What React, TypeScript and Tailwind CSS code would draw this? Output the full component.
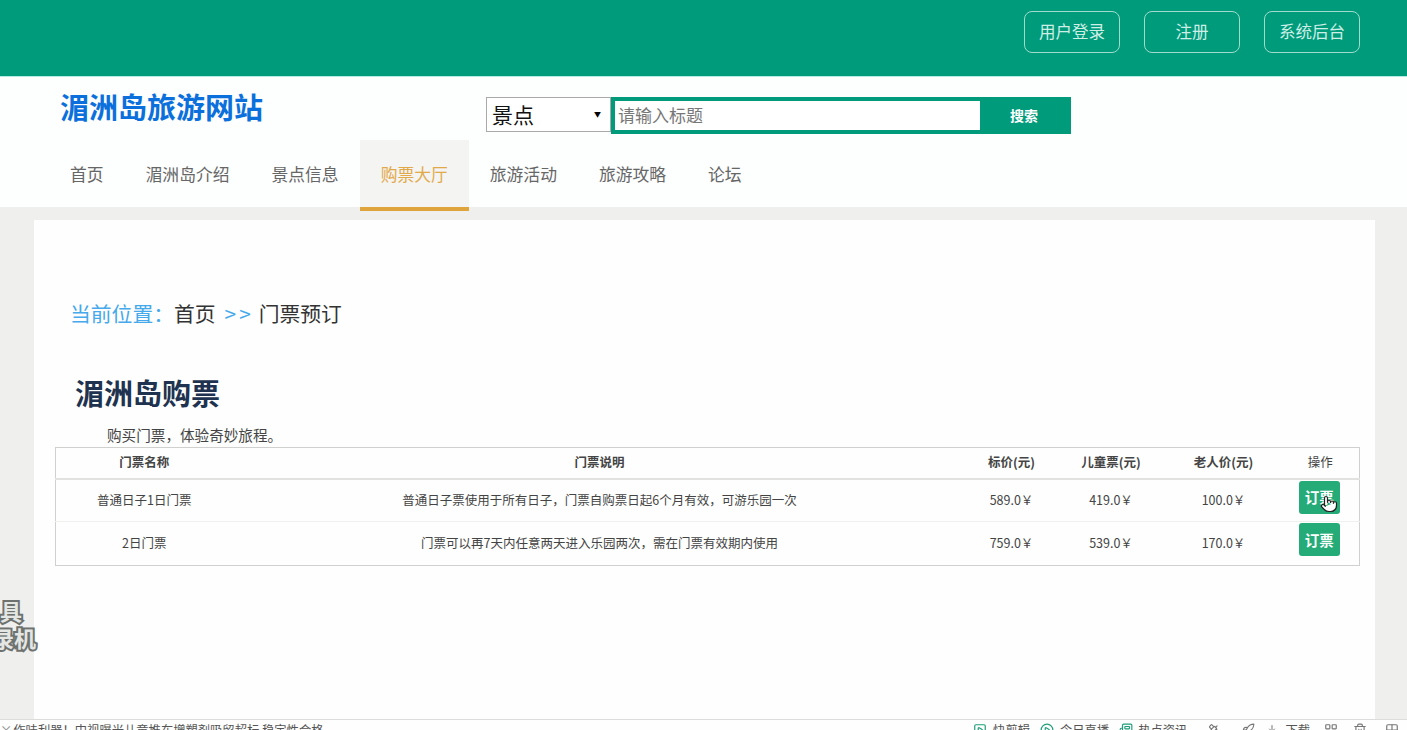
import { CirclePlay, Download, Grid2x2, LayoutGrid, Newspaper, Pointer, Rocket, Satellite, SquarePlay, Trash2 } from "lucide-react";

const font = "font-['Noto_Sans_CJK_SC','Liberation_Sans',sans-serif]";

const topLinks = ["用户登录", "注册", "系统后台"];
const navItems = ["首页", "湄洲岛介绍", "景点信息", "购票大厅", "旅游活动", "旅游攻略", "论坛"];
const tickets = [
  {
    name: "普通日子1日门票",
    desc: "普通日子票使用于所有日子，门票自购票日起6个月有效，可游乐园一次",
    price: "589.0￥",
    child: "419.0￥",
    old: "100.0￥",
  },
  {
    name: "2日门票",
    desc: "门票可以再7天内任意两天进入乐园两次，需在门票有效期内使用",
    price: "759.0￥",
    child: "539.0￥",
    old: "170.0￥",
  },
];

function TopBar() {
  return (
    <div className="h-[77px] bg-[#009b7b] border-b-[1px] border-b-[#b5ece0] flex justify-end gap-[24px] pt-[11px] pr-[47px]">
      {topLinks.map((link) => (
        <a
          key={link}
          className="w-[96px] h-[42px] pb-[1px] flex items-center justify-center rounded-[8px] border border-[#9fdccd] text-[16.5px] text-[#cfeee6]"
        >
          {link}
        </a>
      ))}
    </div>
  );
}

function Header() {
  return (
    <div className="h-[130px] bg-[#fdfefe]">
      <div className="h-[63px] flex items-start">
        <div className="ml-[60px] w-[426px] mt-[9px] text-[29px] leading-[40px] font-bold text-[#0c70dc]">湄洲岛旅游网站</div>
        {/* Search */}
        <div className="mt-[20px] flex h-[37px]">
          <div className="w-[125px] h-[35px] flex items-center justify-between pl-[5px] pr-[9px] bg-white border border-[#a9a9a9] text-[21px] text-[#111]">
            景点
            <span className="text-[7px] text-black">▼</span>
          </div>
          <div className="w-[369px] border-[4px] border-r-0 border-[#009b7b] bg-white flex items-center pl-[3px] pb-[1px] text-[17px] text-[#777]">
            请输入标题
          </div>
          <div className="w-[91px] pr-[3px] bg-[#009b7b] flex items-center justify-center text-[14px] font-bold text-white">搜索</div>
        </div>
      </div>
      {/* Nav */}
      <div className="flex pl-[49px] h-[71px]">
        {navItems.map((item) => (
          <a
            key={item}
            className={
              item === "购票大厅"
                ? "px-[21px] pt-[3px] flex items-center text-[16.8px] text-[#e2a94a] bg-[#f4f4f2] border-b-[4px] border-[#dfa43b]"
                : "px-[21px] pb-[1px] flex items-center text-[16.8px] text-[#666]"
            }
          >
            {item}
          </a>
        ))}
      </div>
    </div>
  );
}

function TicketTable() {
  return (
    <table className="mt-[2px] ml-[21px] w-[1304px] table-fixed border-collapse border border-[#d0d0ce] text-[12.5px] text-[#444] text-center">
      <colgroup>
        <col className="w-[177px]" />
        <col className="w-[734px]" />
        <col className="w-[90px]" />
        <col className="w-[109px]" />
        <col className="w-[116px]" />
        <col className="w-[78px]" />
      </colgroup>
      <thead>
        <tr className="h-[31px] border-b-[2px] border-[#e2e3e1]">
          <th className="font-bold whitespace-nowrap">门票名称</th>
          <th className="font-bold whitespace-nowrap">门票说明</th>
          <th className="font-bold whitespace-nowrap">标价(元)</th>
          <th className="font-bold whitespace-nowrap">儿童票(元)</th>
          <th className="font-bold whitespace-nowrap">老人价(元)</th>
          <th className="font-normal">操作</th>
        </tr>
      </thead>
      <tbody>
        {tickets.map((t, i) => (
          <tr key={t.name} className={i === 0 ? "h-[43px] border-b border-[#f0f1ef]" : "h-[44px]"}>
            <td>{t.name}</td>
            <td>{t.desc}</td>
            <td>{t.price}</td>
            <td>{t.child}</td>
            <td>{t.old}</td>
            <td className="align-top pt-[1px] pr-[2px]">
              <div className="relative mx-auto w-[41px] h-[33px] rounded-[3px] bg-[#24ab77] flex items-center justify-center text-[14.5px] font-bold text-white">
                订票
                {i === 0 && (
                  <Pointer size={18} className="absolute left-[21px] top-[14px] fill-white text-[#222]" strokeWidth={1.6} />
                )}
              </div>
            </td>
          </tr>
        ))}
      </tbody>
    </table>
  );
}

function Content() {
  return (
    <div className="mt-[13px] ml-[34px] w-[1341px] h-[510px] bg-[#fdfefd]">
      <div className="pt-[77px] pl-[36px] flex text-[20.8px] leading-[32px] text-[#333]">
        <span className="text-[#46a9ec]">当前位置：</span>
        <span>首页</span>
        <span className="text-[#46a9ec] ml-[9px] mr-[8px] flex gap-[3px]">
          <span>&gt;</span>
          <span>&gt;</span>
        </span>
        <span>门票预订</span>
      </div>
      <h1 className="mt-[43px] ml-[41px] text-[29px] leading-[40px] font-bold text-[#1f3350]">湄洲岛购票</h1>
      <p className="mt-[12px] ml-[73px] text-[14.6px] leading-[21px] text-[#444]">购买门票，体验奇妙旅程。</p>
      <TicketTable />
    </div>
  );
}

function BottomBar() {
  return (
    <div className="absolute left-0 right-0 top-[719px] h-[11px] overflow-hidden border-t border-[#dcdcda] bg-[#fdfefd] flex items-start text-[12.3px] leading-[18px] text-[#555]">
      <span className="mt-[1px] text-[#888]">×</span>
      <span className="ml-[1px] mt-[1px]">作味利器！中视曝光儿童推车增塑剂吸留超标 稳定性合格</span>
      <div className="ml-auto flex items-start mt-[1px] pr-[8px]">
        <SquarePlay size={14} className="mt-[2px] text-[#1f9e78]" />
        <span className="ml-[6px]">快剪辑</span>
        <CirclePlay size={14} className="ml-[10px] mt-[2px] text-[#1f9e78]" />
        <span className="ml-[6px]">今日直播</span>
        <Newspaper size={14} className="ml-[10px] mt-[2px] text-[#1f9e78]" />
        <span className="ml-[5px]">热点资讯</span>
        <Satellite size={14} className="ml-[19px] mt-[2px] text-[#777]" />
        <Rocket size={14} className="ml-[21px] mt-[2px] text-[#777]" />
        <Download size={12} className="ml-[11px] mt-[3px] text-[#777]" />
        <span className="ml-[7px]">下载</span>
        <LayoutGrid size={14} className="ml-[14px] mt-[2px] text-[#777]" />
        <Trash2 size={14} className="ml-[15px] mt-[2px] text-[#777]" />
        <Grid2x2 size={14} className="ml-[18px] mt-[2px] text-[#777]" />
      </div>
    </div>
  );
}

export default function App() {
  return (
    <div className={`relative h-[730px] overflow-hidden bg-[#eff0ee] ${font}`}>
      <TopBar />
      <Header />
      <Content />
      {/* Recorder watermark, cut off by the left edge */}
      <div className="absolute left-0 top-[597px] text-[22px] leading-[26px] font-bold text-[#e4e6e4] [-webkit-text-stroke:4px_#6e726f] [paint-order:stroke_fill]">
        具
      </div>
      <div className="absolute left-[-8px] top-[624px] text-[22px] leading-[26px] font-bold text-[#e4e6e4] [-webkit-text-stroke:4px_#6e726f] [paint-order:stroke_fill]">
        录机
      </div>
      <BottomBar />
    </div>
  );
}
